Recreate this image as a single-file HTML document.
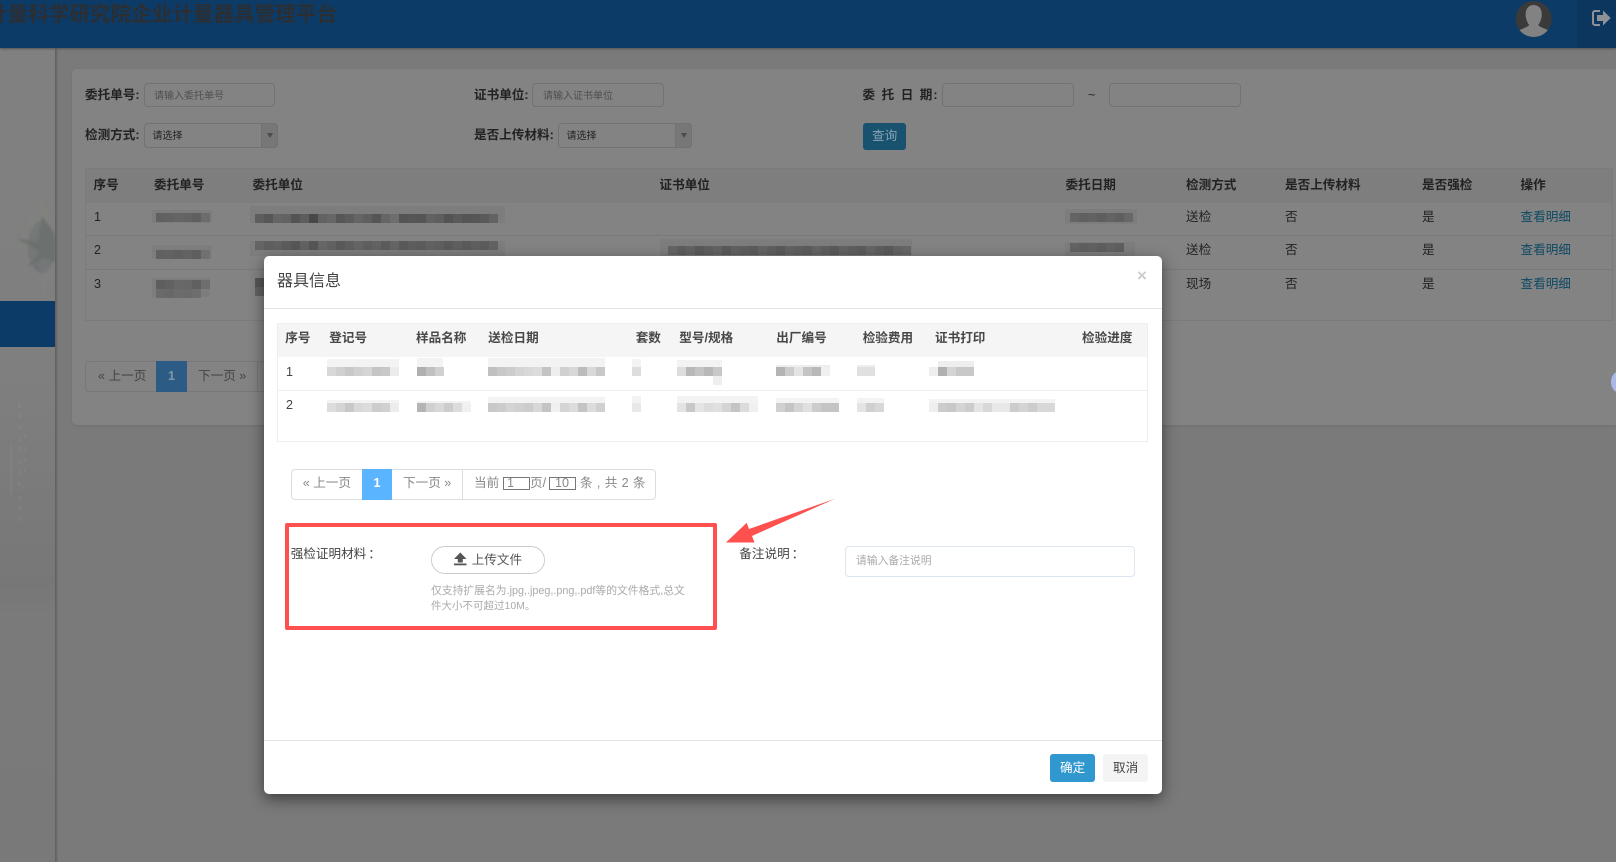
<!DOCTYPE html>
<html lang="zh-CN"><head><meta charset="utf-8"><title>企业计量器具管理平台</title>
<style>
html,body{margin:0;padding:0;width:1616px;height:862px;overflow:hidden;background:#7a7a7a}
body{position:relative;font-family:"Liberation Sans","Noto Sans CJK SC",sans-serif;font-size:12.6px;color:#222}
.a{position:absolute;box-sizing:border-box}
.t{position:absolute;white-space:nowrap;line-height:20px;margin-top:-10px}
.b{font-weight:bold}
.in{position:absolute;box-sizing:border-box;border:1px solid #6f7378;border-radius:4px;background:#838383}
.ph{font-size:10px;color:#4f4f4f}
svg{position:absolute;left:0;top:0}
rect{width:9px;height:9px}
.link{color:#0f4a63}
.m{color:#444}
.mh{color:#484848;font-weight:bold}
.c{margin-left:2px}
</style></head><body>
<!-- sidebar -->
<div class="a" style="left:0;top:48px;width:55px;height:814px;background:linear-gradient(#808080,#7f7f7f 40%,#777 66%,#7a7a7a 70%,#797979)"></div>
<svg width="60" height="320" style="top:0;left:0">
<g style="filter:blur(1px)">
<ellipse cx="42" cy="247" rx="14" ry="26" fill="#6a6e73" opacity=".7"/>
<path d="M55 222 40 190 36 222 22 195 30 232 10 222 32 244 8 242 32 254 20 275 38 262 44 300 50 270 55 280Z" fill="#85877d" opacity=".25"/>
<path d="M55 235 42 216 38 242 16 238 40 252 26 268 44 258 55 262Z" fill="#6c6f6b" opacity=".8"/>
</g></svg>
<div class="a" style="left:0;top:301px;width:55px;height:46px;background:#0d3b68"></div>
<svg width="55" height="862"><g fill="#8b8b8b">
<path d="M18 402h3v6h-3zM18 414h3v4h-3zM18 425h3v4h-3zM18 436h3v5h-3zM24 434h2v4h-2zM18 446h3v5h-3zM24 446h2v5h-2zM10 444h2v50h-2zM18 460h3v4h-3zM24 458h2v4h-2zM18 470h3v5h-3zM24 468h2v5h-2zM18 482h3v4h-3zM22 486h3v3h-3zM18 496h3v4h-3zM18 506h3v4h-3zM18 516h3v5h-3z" opacity=".3"/></g></svg>
<div class="a" style="left:55px;top:48px;width:3px;height:814px;background:linear-gradient(90deg,#5f5f5f,#757575)"></div>
<!-- header -->
<div class="a" style="left:0;top:0;width:1616px;height:48px;background:#0d3b68;box-shadow:0 1px 2px #555"></div>
<div class="a" style="left:1577px;top:0;width:39px;height:48px;background:#0c365e"></div>
<div class="t b" style="left:-13px;top:15px;font-size:20.600px;line-height:26px;margin-top:-13px;color:#2b2f33">计量科学研究院企业计量器具管理平台</div>
<svg width="1616" height="50">
<circle cx="1533.7" cy="19" r="18" fill="#3a3a3a"/>
<clipPath id="av"><circle cx="1533.7" cy="19" r="18"/></clipPath>
<path clip-path="url(#av)" d="M1533.7 5c6 0 8.500 5 8 11-.4 4-2 7-3.500 9 1.500 2.500 8 3.500 13 7v8h-35v-8c5-3.500 11.500-4.500 13-7-1.500-2-3.100-5-3.500-9-.5-6 2-11 8-11Z" fill="#828282"/>
<path d="M1600 11h-5a2 2 0 0 0-2 2v10a2 2 0 0 0 2 2h5" fill="none" stroke="#8d9298" stroke-width="2"/>
<path d="M1597 15h6v-4.500l7.700 7.500-7.700 7.500V21h-6Z" fill="#8d9298"/>
</svg>
<!-- panel -->
<div class="a" style="left:72px;top:69px;width:1544px;height:356px;background:#838383;border-radius:5px 0 0 5px;box-shadow:0 1px 2px #717171"></div>
<div class="t b" style="left:85px;top:95px">委托单号:</div>
<div class="in" style="left:143.500px;top:83px;width:131px;height:24px"></div>
<div class="t ph" style="left:154px;top:97px">请输入委托单号</div>
<div class="t b" style="left:474px;top:95px">证书单位:</div>
<div class="in" style="left:532px;top:83px;width:132px;height:24px"></div>
<div class="t ph" style="left:543px;top:97px">请输入证书单位</div>
<div class="t b" style="left:862.500px;top:95px;letter-spacing:6.500px">委托日期<span style="letter-spacing:0;margin-left:-5.500px">:</span></div>
<div class="in" style="left:942px;top:83px;width:132px;height:24px"></div>
<div class="t" style="left:1088px;top:95px">~</div>
<div class="in" style="left:1109px;top:83px;width:132px;height:24px"></div>
<div class="t b" style="left:85px;top:135px">检测方式:</div>
<div class="in" style="left:143.500px;top:123px;width:134px;height:25px"></div>
<div class="a" style="left:261px;top:123px;width:16.500px;height:25px;background:#777;border:1px solid #6f7378;border-radius:0 4px 4px 0"></div>
<div class="a" style="left:267px;top:133px;border:3px solid transparent;border-top:5px solid #4c4c4c"></div>
<div class="t ph" style="left:152.500px;top:136.500px;color:#222">请选择</div>
<div class="t b" style="left:474px;top:135px">是否上传材料:</div>
<div class="in" style="left:557.500px;top:123px;width:134px;height:25px"></div>
<div class="a" style="left:675px;top:123px;width:16.500px;height:25px;background:#777;border:1px solid #6f7378;border-radius:0 4px 4px 0"></div>
<div class="a" style="left:681px;top:133px;border:3px solid transparent;border-top:5px solid #4c4c4c"></div>
<div class="t ph" style="left:566.500px;top:136.500px;color:#222">请选择</div>
<div class="a" style="left:863px;top:122.500px;width:43px;height:27px;background:#18526f;border-radius:3px"></div>
<div class="t" style="left:872px;top:135.500px;color:#88a3b3">查询</div>
<!-- bg table -->
<div class="a" style="left:85px;top:168px;width:1528px;height:153px;border:1px solid #7b7b7b"></div>
<div class="a" style="left:86px;top:169px;width:1526px;height:34px;background:#7e7e7e"></div>
<div class="a" style="left:86px;top:235px;width:1526px;height:1px;background:#797979"></div>
<div class="a" style="left:86px;top:269px;width:1526px;height:1px;background:#797979"></div>
<div class="t b" style="left:93.500px;top:185px">序号</div>
<div class="t b" style="left:154px;top:185px">委托单号</div>
<div class="t b" style="left:252.500px;top:185px">委托单位</div>
<div class="t b" style="left:659.500px;top:185px">证书单位</div>
<div class="t b" style="left:1065.500px;top:185px">委托日期</div>
<div class="t b" style="left:1186px;top:185px">检测方式</div>
<div class="t b" style="left:1285px;top:185px">是否上传材料</div>
<div class="t b" style="left:1422px;top:185px">是否强检</div>
<div class="t b" style="left:1520.500px;top:185px">操作</div>
<div class="t" style="left:94px;top:217px">1</div><div class="t" style="left:94px;top:250px">2</div><div class="t" style="left:94px;top:284px">3</div>
<div class="t" style="left:1186px;top:217px">送检</div><div class="t" style="left:1186px;top:250px">送检</div><div class="t" style="left:1186px;top:284px">现场</div>
<div class="t" style="left:1285px;top:217px">否</div><div class="t" style="left:1285px;top:250px">否</div><div class="t" style="left:1285px;top:284px">否</div>
<div class="t" style="left:1422px;top:217px">是</div><div class="t" style="left:1422px;top:250px">是</div><div class="t" style="left:1422px;top:284px">是</div>
<div class="t link" style="left:1520.500px;top:217px">查看明细</div><div class="t link" style="left:1520.500px;top:250px">查看明细</div><div class="t link" style="left:1520.500px;top:284px">查看明细</div>
<!-- bg mosaics -->
<svg width="1616" height="320">
<path d="M152 210h60v13h-60zM250 206h255v17h-255zM152 245h60v14h-60zM250 241h255v15h-255zM152 278h58v19h-58zM660 239h252v17h-252zM1065 209h72v15h-72zM1065 242h70v14h-70z" fill="#7d7d7d"/>
<g fill="#676767" style="filter:brightness(.9)"><rect x="156" y="213" fill="#6b6b6b"/><rect x="165" y="213" fill="#6d6d6d"/><rect x="174" y="213" fill="#707070"/><rect x="183" y="213" fill="#6e6e6e"/><rect x="192" y="213" fill="#6a6a6a"/><rect x="201" y="213" fill="#787878"/>
<rect x="255" y="214"/><rect x="264" y="214" fill="#5f5f5f"/><rect x="273" y="214" fill="#707070"/><rect x="282" y="214" fill="#6d6d6d"/><rect x="291" y="214" fill="#5d5d5d"/><rect x="300" y="214"/><rect x="309" y="214" fill="#505050"/><rect x="318" y="214" fill="#6d6d6d"/><rect x="327" y="214" fill="#727272"/><rect x="336" y="214" fill="#606060"/><rect x="345" y="214" fill="#666"/><rect x="354" y="214" fill="#707070"/><rect x="363" y="214" fill="#6a6a6a"/><rect x="372" y="214" fill="#5e5e5e"/><rect x="381" y="214" fill="#707070"/><rect x="390" y="214" fill="#7a7a7a"/><rect x="399" y="214" fill="#5d5d5d"/><rect x="408" y="214" fill="#606060"/><rect x="417" y="214" fill="#5e5e5e"/><rect x="426" y="214" fill="#6d6d6d"/><rect x="435" y="214" fill="#696969"/><rect x="444" y="214" fill="#5c5c5c"/><rect x="453" y="214" fill="#646464"/><rect x="462" y="214" fill="#5e5e5e"/><rect x="471" y="214" fill="#606060"/><rect x="480" y="214" fill="#646464"/><rect x="489" y="214" fill="#6e6e6e"/>
<rect x="156" y="250" fill="#6b6b6b"/><rect x="165" y="250" fill="#6d6d6d"/><rect x="174" y="250" fill="#6a6a6a"/><rect x="183" y="250" fill="#6e6e6e"/><rect x="192" y="250" fill="#6a6a6a"/><rect x="201" y="250" fill="#7d7d7d"/>
<rect x="255" y="241" fill="#707070"/><rect x="264" y="241" fill="#6a6a6a"/><rect x="273" y="241" fill="#6d6d6d"/><rect x="282" y="241" fill="#666"/><rect x="291" y="241" fill="#606060"/><rect x="300" y="241" fill="#6d6d6d"/><rect x="309" y="241" fill="#5f5f5f"/><rect x="318" y="241" fill="#727272"/><rect x="327" y="241" fill="#6d6d6d"/><rect x="336" y="241" fill="#646464"/><rect x="345" y="241" fill="#6a6a6a"/><rect x="354" y="241" fill="#707070"/><rect x="363" y="241" fill="#6a6a6a"/><rect x="372" y="241" fill="#6e6e6e"/><rect x="381" y="241" fill="#666"/><rect x="390" y="241" fill="#707070"/><rect x="399" y="241" fill="#646464"/><rect x="408" y="241" fill="#696969"/><rect x="417" y="241" fill="#666"/><rect x="426" y="241" fill="#6d6d6d"/><rect x="435" y="241" fill="#6a6a6a"/><rect x="444" y="241" fill="#646464"/><rect x="453" y="241" fill="#6a6a6a"/><rect x="462" y="241" fill="#646464"/><rect x="471" y="241" fill="#6a6a6a"/><rect x="480" y="241" fill="#666"/><rect x="489" y="241" fill="#6e6e6e"/>
<rect x="156" y="280" fill="#686868"/><rect x="165" y="280" fill="#6d6d6d"/><rect x="174" y="280" fill="#747474"/><rect x="183" y="280" fill="#727272"/><rect x="192" y="280" fill="#6b6b6b"/><rect x="201" y="280" fill="#7a7a7a"/>
<rect x="156" y="289" fill="#767676"/><rect x="165" y="289" fill="#747474"/><rect x="174" y="289" fill="#787878"/><rect x="183" y="289" fill="#767676"/><rect x="192" y="289" fill="#7a7a7a"/>
<rect x="255" y="278" fill="#606060"/><rect x="255" y="287" fill="#6d6d6d"/>
<rect x="668" y="246" fill="#707070"/><rect x="677" y="246" fill="#696969"/><rect x="686" y="246" fill="#6e6e6e"/><rect x="695" y="246" fill="#646464"/><rect x="704" y="246" fill="#6a6a6a"/><rect x="713" y="246" fill="#6e6e6e"/><rect x="722" y="246" fill="#646464"/><rect x="731" y="246" fill="#6d6d6d"/><rect x="740" y="246" fill="#6a6a6a"/><rect x="749" y="246" fill="#666"/><rect x="758" y="246" fill="#707070"/><rect x="767" y="246" fill="#6a6a6a"/><rect x="776" y="246" fill="#646464"/><rect x="785" y="246" fill="#6e6e6e"/><rect x="794" y="246" fill="#6a6a6a"/><rect x="803" y="246" fill="#666"/><rect x="812" y="246" fill="#707070"/><rect x="821" y="246" fill="#6a6a6a"/><rect x="830" y="246" fill="#646464"/><rect x="839" y="246" fill="#6e6e6e"/><rect x="848" y="246" fill="#6a6a6a"/><rect x="857" y="246" fill="#666"/><rect x="866" y="246" fill="#707070"/><rect x="875" y="246" fill="#6a6a6a"/><rect x="884" y="246" fill="#646464"/><rect x="893" y="246" fill="#6e6e6e"/><rect x="902" y="246" fill="#727272"/>
<rect x="1070" y="213" fill="#6f6f6f"/><rect x="1079" y="213" fill="#6b6b6b"/><rect x="1088" y="213" fill="#6d6d6d"/><rect x="1097" y="213" fill="#686868"/><rect x="1106" y="213" fill="#6e6e6e"/><rect x="1115" y="213" fill="#6a6a6a"/><rect x="1124" y="213" fill="#727272"/>
<rect x="1070" y="243" fill="#6f6f6f"/><rect x="1079" y="243" fill="#6b6b6b"/><rect x="1088" y="243" fill="#6d6d6d"/><rect x="1097" y="243" fill="#686868"/><rect x="1106" y="243" fill="#6e6e6e"/><rect x="1115" y="243" fill="#6a6a6a"/></g>
</svg>
<!-- bg pagination -->
<div class="a" style="left:85px;top:361px;width:190px;height:31px;border:1px solid #777;border-radius:4px 0 0 4px"></div>
<div class="a" style="left:156px;top:361px;width:31px;height:31px;background:#2c5c85"></div>
<div class="a" style="left:257px;top:361px;width:1px;height:31px;background:#777"></div>
<div class="t" style="left:98px;top:376px;color:#444">« 上一页</div>
<div class="t" style="left:168px;top:376px;color:#8295a6;font-weight:bold">1</div>
<div class="t" style="left:198px;top:376px;color:#444">下一页 »</div>
<div class="a" style="left:1611px;top:371px;width:18px;height:22px;border-radius:50%;background:#a9b8e6"></div>
<!-- modal -->
<div class="a" style="left:264px;top:256px;width:898px;height:538px;background:#fff;border-radius:5px;box-shadow:0 5px 15px rgba(0,0,0,.5)"></div>
<div class="t" style="left:277px;top:281.500px;font-size:16px;line-height:22px;margin-top:-11px;color:#444">器具信息</div>
<div class="t" style="left:1137px;top:276px;font-size:17px;font-weight:bold;color:#ccc">×</div>
<div class="a" style="left:264px;top:308px;width:898px;height:1px;background:#e5e5e5"></div>
<div class="a" style="left:277px;top:323px;width:871px;height:119px;border:1px solid #eee"></div>
<div class="a" style="left:278px;top:324px;width:869px;height:33px;background:#f5f5f5"></div>
<div class="a" style="left:278px;top:390px;width:869px;height:1px;background:#eee"></div>
<div class="t mh" style="left:285.300px;top:338px">序号</div>
<div class="t mh" style="left:329.300px;top:338px">登记号</div>
<div class="t mh" style="left:416px;top:338px">样品名称</div>
<div class="t mh" style="left:488.300px;top:338px">送检日期</div>
<div class="t mh" style="left:635.700px;top:338px">套数</div>
<div class="t mh" style="left:679.300px;top:338px">型号/规格</div>
<div class="t mh" style="left:776.300px;top:338px">出厂编号</div>
<div class="t mh" style="left:862.700px;top:338px">检验费用</div>
<div class="t mh" style="left:935px;top:338px">证书打印</div>
<div class="t mh" style="left:1082px;top:338px">检验进度</div>
<div class="t m" style="left:286px;top:371.500px">1</div>
<div class="t m" style="left:286px;top:405px">2</div>
<svg width="1616" height="430">
<path d="M327 359h72v8h-72zM417 358h26v9h-26zM488 358h117v9h-117zM632 359h9v8h-9zM677 360h45v7h-45zM488 397h117v6h-117zM327 400h72v3h-72zM677 396h81v7h-81zM776 398h63v5h-63zM857 398h27v5h-27zM929 399h126v4h-126zM632 396h9v7h-9zM417 401h53v2h-53z" fill="#f3f3f3"/>
<rect x="327" y="367" fill="#d8d8d8"/><rect x="336" y="367" fill="#d0d0d0"/><rect x="345" y="367" fill="#c8c8c8"/><rect x="354" y="367" fill="#d0d0d0"/><rect x="363" y="367" fill="#d5d5d5"/><rect x="372" y="367" fill="#c4c4c4"/><rect x="381" y="367" fill="#c8c8c8"/><rect x="390" y="367" fill="#ececec"/>
<rect x="417" y="367" fill="#b0b0b0"/><rect x="426" y="367" fill="#c0c0c0"/><rect x="435" y="367" fill="#d0d0d0"/>
<rect x="488" y="367" fill="#c0c0c0"/><rect x="497" y="367" fill="#c8c8c8"/><rect x="506" y="367" fill="#ccc"/><rect x="515" y="367" fill="#d4d4d4"/><rect x="524" y="367" fill="#d8d8d8"/><rect x="533" y="367" fill="#dcdcdc"/><rect x="542" y="367" fill="#c4c4c4"/><rect x="551" y="367" fill="#eee"/><rect x="560" y="367" fill="#d0d0d0"/><rect x="569" y="367" fill="#d8d8d8"/><rect x="578" y="367" fill="#bcbcbc"/><rect x="587" y="367" fill="#d8d8d8"/><rect x="596" y="367" fill="#c8c8c8"/>
<rect x="632" y="367" fill="#ddd"/>
<rect x="677" y="367" fill="#ddd"/><rect x="686" y="367" fill="#b8b8b8"/><rect x="695" y="367" fill="#c4c4c4"/><rect x="704" y="367" fill="#b8b8b8"/><rect x="713" y="367" fill="#c8c8c8"/><rect x="713" y="376" fill="#eee"/>
<path d="M776 365h54v2h-54zM857 365h18v2h-18zM938 361h36v6h-36z" fill="#eee"/>
<rect x="776" y="367" fill="#b4b4b4"/><rect x="785" y="367" fill="#ccc"/><rect x="794" y="367" fill="#e4e4e4"/><rect x="803" y="367" fill="#c4c4c4"/><rect x="812" y="367" fill="#b8b8b8"/><rect x="821" y="367" fill="#f0f0f0"/>
<rect x="857" y="367" fill="#e0e0e0"/><rect x="866" y="367" fill="#e0e0e0"/>
<rect x="929" y="367" fill="#eee"/><rect x="938" y="367" fill="#b0b0b0"/><rect x="947" y="367" fill="#d4d4d4"/><rect x="956" y="367" fill="#c8c8c8"/><rect x="965" y="367" fill="#c8c8c8"/>
<rect x="327" y="403" fill="#dcdcdc"/><rect x="336" y="403" fill="#d4d4d4"/><rect x="345" y="403" fill="#c8c8c8"/><rect x="354" y="403" fill="#d8d8d8"/><rect x="363" y="403" fill="#dcdcdc"/><rect x="372" y="403" fill="#ccc"/><rect x="381" y="403" fill="#d0d0d0"/><rect x="390" y="403" fill="#ececec"/>
<rect x="417" y="403" fill="#b4b4b4"/><rect x="426" y="403" fill="#d0d0d0"/><rect x="435" y="403" fill="#d8d8d8"/><rect x="444" y="403" fill="#ccc"/><rect x="453" y="403" fill="#dcdcdc"/><rect x="462" y="403" fill="#f0f0f0"/>
<rect x="488" y="403" fill="#c8c8c8"/><rect x="497" y="403" fill="#ccc"/><rect x="506" y="403" fill="#d4d4d4"/><rect x="515" y="403" fill="#d0d0d0"/><rect x="524" y="403" fill="#ccc"/><rect x="533" y="403" fill="#d8d8d8"/><rect x="542" y="403" fill="#c4c4c4"/><rect x="551" y="403" fill="#f0f0f0"/><rect x="560" y="403" fill="#d4d4d4"/><rect x="569" y="403" fill="#dcdcdc"/><rect x="578" y="403" fill="#c4c4c4"/><rect x="587" y="403" fill="#dcdcdc"/><rect x="596" y="403" fill="#d0d0d0"/>
<rect x="632" y="403" fill="#e8e8e8"/>
<rect x="677" y="403" fill="#e4e4e4"/><rect x="686" y="403" fill="#c8c8c8"/><rect x="695" y="403" fill="#e4e4e4"/><rect x="704" y="403" fill="#dcdcdc"/><rect x="713" y="403" fill="#e0e0e0"/><rect x="722" y="403" fill="#d4d4d4"/><rect x="731" y="403" fill="#c4c4c4"/><rect x="740" y="403" fill="#dcdcdc"/><rect x="749" y="403" fill="#f0f0f0"/>
<rect x="776" y="403" fill="#d0d0d0"/><rect x="785" y="403" fill="#c4c4c4"/><rect x="794" y="403" fill="#d4d4d4"/><rect x="803" y="403" fill="#e0e0e0"/><rect x="812" y="403" fill="#ccc"/><rect x="821" y="403" fill="#c4c4c4"/><rect x="830" y="403" fill="#c4c4c4"/>
<rect x="857" y="403" fill="#e4e4e4"/><rect x="866" y="403" fill="#d0d0d0"/><rect x="875" y="403" fill="#d8d8d8"/>
<rect x="929" y="403" fill="#eee"/><rect x="938" y="403" fill="#ccc"/><rect x="947" y="403" fill="#c8c8c8"/><rect x="956" y="403" fill="#d4d4d4"/><rect x="965" y="403" fill="#ccc"/><rect x="974" y="403" fill="#e4e4e4"/><rect x="983" y="403" fill="#d8d8d8"/><rect x="992" y="403" fill="#e8e8e8"/><rect x="1001" y="403" fill="#e8e8e8"/><rect x="1010" y="403" fill="#ccc"/><rect x="1019" y="403" fill="#d4d4d4"/><rect x="1028" y="403" fill="#ccc"/><rect x="1037" y="403" fill="#d8d8d8"/><rect x="1046" y="403" fill="#d8d8d8"/>
</svg>
<!-- modal pagination -->
<div class="a" style="left:291px;top:469px;width:365px;height:31px;border:1px solid #ddd;border-radius:4px"></div>
<div class="a" style="left:362px;top:469px;width:30px;height:31px;background:#5ab4ff"></div>
<div class="a" style="left:462px;top:469px;width:1px;height:31px;background:#ddd"></div>
<div class="t" style="left:302.700px;top:482.500px;color:#888">« 上一页</div>
<div class="t b" style="left:373.500px;top:482.500px;color:#fff">1</div>
<div class="t" style="left:403px;top:482.500px;color:#888">下一页 »</div>
<div class="t" style="left:474px;top:482.500px;color:#888">当前</div>
<div class="a" style="left:503px;top:476.500px;width:27px;height:13px;border:1px solid #777;font-size:12.600px;line-height:11px;padding-left:3px;color:#888">1</div>
<div class="t" style="left:530px;top:482.500px;color:#888">页/</div>
<div class="a" style="left:549px;top:476.500px;width:27px;height:13px;border:1px solid #777;font-size:12.600px;line-height:11px;padding-left:5px;color:#888">10</div>
<div class="t" style="left:580px;top:482.500px;color:#888;letter-spacing:.4px">条 , 共 2 条</div>
<!-- red highlight -->
<div class="a" style="left:285px;top:522.500px;width:432px;height:107.500px;border:4px solid #ff5050;border-radius:2px"></div>
<div class="t m" style="left:290.700px;top:553.500px">强检证明材料<span class="c">：</span></div>
<div class="a" style="left:431px;top:546px;width:114px;height:28px;border:1px solid #ccc;border-radius:14px;background:#fff"></div>
<svg width="1616" height="600">
<path d="M460.300 552.500 466.500 559h-3.700v3.500h-5V559H454Z" fill="#555"/><rect x="454" y="563.500" style="width:12.500px;height:1.800px" fill="#555"/>
<path d="M726 542.500 746.700 522.700 749 529 835 498.700 752 536 754.500 542.500Z" fill="#ff5050"/>
</svg>
<div class="t" style="left:471.700px;top:560px;color:#555">上传文件</div>
<div class="t" style="left:431px;top:590.500px;font-size:10.800px;color:#aaa">仅支持扩展名为.jpg,.jpeg,.png,.pdf等的文件格式,总文</div>
<div class="t" style="left:431px;top:605.500px;font-size:10.500px;color:#aaa">件大小不可超过10M。</div>
<div class="t m" style="left:739.300px;top:553.500px">备注说明<span class="c">：</span></div>
<div class="a" style="left:845px;top:546px;width:290px;height:31px;border:1px solid #dde5ee;border-radius:4px;background:#fff"></div>
<div class="t" style="left:856px;top:561px;color:#aaa;font-size:10.800px">请输入备注说明</div>
<!-- footer -->
<div class="a" style="left:264px;top:740px;width:898px;height:1px;background:#e5e5e5"></div>
<div class="a" style="left:1050px;top:754px;width:45px;height:28px;background:#3097cf;border-radius:3px"></div>
<div class="t" style="left:1060px;top:767.500px;color:#fff">确定</div>
<div class="a" style="left:1103px;top:754px;width:45px;height:28px;background:#f4f4f4;border-radius:3px"></div>
<div class="t" style="left:1113px;top:767.500px;color:#444">取消</div>
</body></html>
